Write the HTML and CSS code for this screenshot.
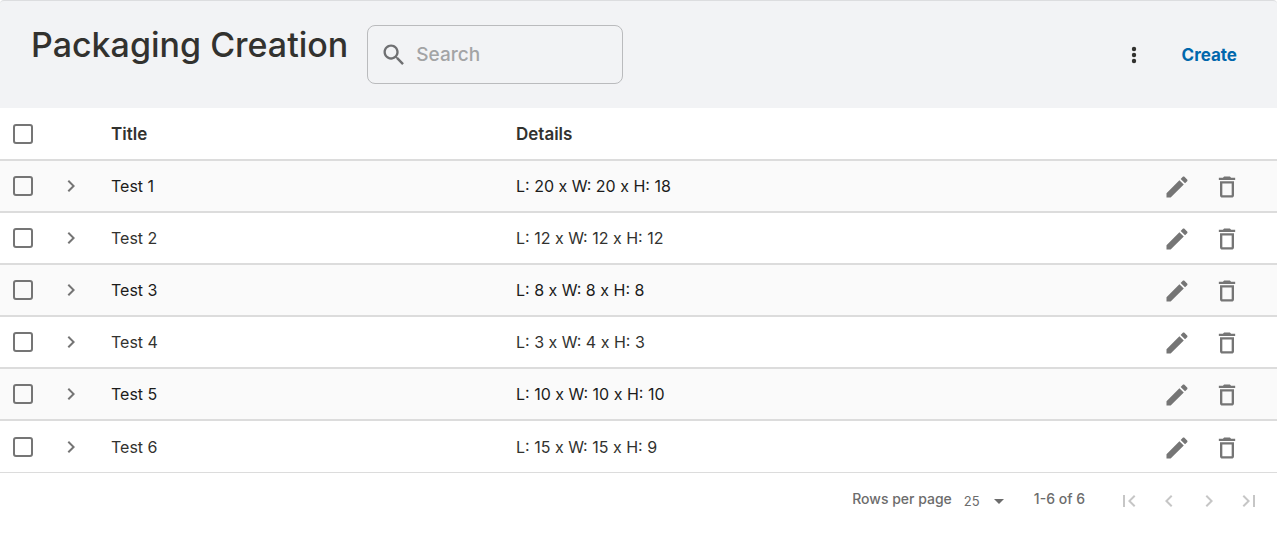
FILE: index.html
```html
<!DOCTYPE html>
<html lang="en">
<head>
<meta charset="utf-8">
<meta name="viewport" content="width=device-width, initial-scale=1">
<title>Packaging Creation</title>
<link rel="stylesheet" href="styles.css">
</head>
<body>
<svg class="sprite" aria-hidden="true">
  <symbol id="edit" viewBox="0 0 24 24"><path d="M3 17.460V21h3.540L17.810 9.940l-3.750-3.750L3 17.250zM20.710 7.040c.39-.39.39-1.020 0-1.410l-2.340-2.340c-.39-.39-1.020-.39-1.410 0l-1.830 1.830 3.750 3.750 1.830-1.830z"/></symbol>
  <symbol id="trash" viewBox="0 0 24 24"><path d="M6 19c0 1.100.9 2 2 2h8c1.100 0 2-.9 2-2V7H6v12zM8 9h8v10H8V9zm7.500-5l-1-1h-5l-1 1H5v2h14V4z"/></symbol>
  <symbol id="next" viewBox="0 0 24 24"><path d="M10 6L8.590 7.410 13.170 12l-4.580 4.590L10 18l6-6z"/></symbol>
  <symbol id="prev" viewBox="0 0 24 24"><path d="M15.410 7.410L14 6l-6 6 6 6 1.410-1.410L10.830 12z"/></symbol>
  <symbol id="first" viewBox="0 0 24 24"><path d="M18.410 16.590L13.820 12l4.590-4.590L17 6l-6 6 6 6zM6 6h2v12H6z"/></symbol>
  <symbol id="last" viewBox="0 0 24 24"><path d="M5.590 7.410L10.180 12l-4.590 4.590L7 18l6-6-6-6zM16 6h2v12h-2z"/></symbol>
</svg>
<header class="toolbar">
  <h1 class="heading">Packaging Creation</h1>
  <label class="search">
    <svg class="icon" viewBox="0 0 24 24" aria-hidden="true"><path d="M15.500 14h-.79l-.28-.27C15.410 12.590 16 11.110 16 9.500 16 5.910 13.090 3 9.500 3S3 5.910 3 9.500 5.910 16 9.500 16c1.610 0 3.090-.59 4.230-1.570l.27.28v.79l5 4.990L20.490 19l-4.990-5zm-6 0C7.010 14 5 11.990 5 9.500S7.010 5 9.500 5 14 7.010 14 9.500 11.990 14 9.500 14z"/></svg>
    <input class="search-input" type="search" placeholder="Search" aria-label="Search">
  </label>
  <div class="toolbar-actions">
    <button class="icon-button more" aria-label="More options"><svg class="icon-small" viewBox="0 0 24 24" aria-hidden="true"><circle cx="12" cy="6" r="2.200"/><circle cx="12" cy="12" r="2.200"/><circle cx="12" cy="18" r="2.200"/></svg></button>
    <button class="create">Create</button>
  </div>
</header>
<table class="table">
  <colgroup><col class="col-check"><col class="col-expand"><col class="col-title"><col><col class="col-actions"></colgroup>
  <thead>
    <tr><th class="check"><input class="checkbox" type="checkbox" aria-label="Select all"></th><th></th><th>Title</th><th>Details</th><th></th></tr>
  </thead>
  <tbody>
    <tr><td class="check"><input class="checkbox" type="checkbox" aria-label="Select Test 1"></td><td><button class="icon-button" aria-label="Expand"><svg class="icon-small" aria-hidden="true"><use href="#next"/></svg></button></td><td>Test 1</td><td>L: 20 x W: 20 x H: 18</td><td><div class="actions"><button class="icon-button" aria-label="Edit"><svg class="icon" aria-hidden="true"><use href="#edit"/></svg></button><button class="icon-button" aria-label="Delete"><svg class="icon" aria-hidden="true"><use href="#trash"/></svg></button></div></td></tr>
    <tr><td class="check"><input class="checkbox" type="checkbox" aria-label="Select Test 2"></td><td><button class="icon-button" aria-label="Expand"><svg class="icon-small" aria-hidden="true"><use href="#next"/></svg></button></td><td>Test 2</td><td>L: 12 x W: 12 x H: 12</td><td><div class="actions"><button class="icon-button" aria-label="Edit"><svg class="icon" aria-hidden="true"><use href="#edit"/></svg></button><button class="icon-button" aria-label="Delete"><svg class="icon" aria-hidden="true"><use href="#trash"/></svg></button></div></td></tr>
    <tr><td class="check"><input class="checkbox" type="checkbox" aria-label="Select Test 3"></td><td><button class="icon-button" aria-label="Expand"><svg class="icon-small" aria-hidden="true"><use href="#next"/></svg></button></td><td>Test 3</td><td>L: 8 x W: 8 x H: 8</td><td><div class="actions"><button class="icon-button" aria-label="Edit"><svg class="icon" aria-hidden="true"><use href="#edit"/></svg></button><button class="icon-button" aria-label="Delete"><svg class="icon" aria-hidden="true"><use href="#trash"/></svg></button></div></td></tr>
    <tr><td class="check"><input class="checkbox" type="checkbox" aria-label="Select Test 4"></td><td><button class="icon-button" aria-label="Expand"><svg class="icon-small" aria-hidden="true"><use href="#next"/></svg></button></td><td>Test 4</td><td>L: 3 x W: 4 x H: 3</td><td><div class="actions"><button class="icon-button" aria-label="Edit"><svg class="icon" aria-hidden="true"><use href="#edit"/></svg></button><button class="icon-button" aria-label="Delete"><svg class="icon" aria-hidden="true"><use href="#trash"/></svg></button></div></td></tr>
    <tr><td class="check"><input class="checkbox" type="checkbox" aria-label="Select Test 5"></td><td><button class="icon-button" aria-label="Expand"><svg class="icon-small" aria-hidden="true"><use href="#next"/></svg></button></td><td>Test 5</td><td>L: 10 x W: 10 x H: 10</td><td><div class="actions"><button class="icon-button" aria-label="Edit"><svg class="icon" aria-hidden="true"><use href="#edit"/></svg></button><button class="icon-button" aria-label="Delete"><svg class="icon" aria-hidden="true"><use href="#trash"/></svg></button></div></td></tr>
    <tr><td class="check"><input class="checkbox" type="checkbox" aria-label="Select Test 6"></td><td><button class="icon-button" aria-label="Expand"><svg class="icon-small" aria-hidden="true"><use href="#next"/></svg></button></td><td>Test 6</td><td>L: 15 x W: 15 x H: 9</td><td><div class="actions"><button class="icon-button" aria-label="Edit"><svg class="icon" aria-hidden="true"><use href="#edit"/></svg></button><button class="icon-button" aria-label="Delete"><svg class="icon" aria-hidden="true"><use href="#trash"/></svg></button></div></td></tr>
  </tbody>
</table>
<footer class="pagination">
  <label class="rows" for="page-size">Rows per page</label>
  <span class="select-wrap">
    <select class="page-size" id="page-size"><option>25</option><option>50</option></select>
    <svg class="caret" viewBox="0 0 10 5" aria-hidden="true"><path d="M0 0h10L5 5z"/></svg>
  </span>
  <span class="range">1-6 of 6</span>
  <nav class="pager" aria-label="Pages">
    <button class="icon-button" disabled aria-label="First page"><svg class="icon-small" aria-hidden="true"><use href="#first"/></svg></button>
    <button class="icon-button" disabled aria-label="Previous page"><svg class="icon-small" aria-hidden="true"><use href="#prev"/></svg></button>
    <button class="icon-button" disabled aria-label="Next page"><svg class="icon-small" aria-hidden="true"><use href="#next"/></svg></button>
    <button class="icon-button" disabled aria-label="Last page"><svg class="icon-small" aria-hidden="true"><use href="#last"/></svg></button>
  </nav>
</footer>
</body>
</html>
```
FILE: styles.css
```css
* { box-sizing: border-box; }
body {
  margin: 0;
  background: #fff;
  color: #32322f;
  font: 16px/24px Inter, "Liberation Sans", sans-serif;
}
button, input, select { margin: 0; padding: 0; border: 0; background: none; color: inherit; font: inherit; }
svg { display: block; fill: currentColor; }
.sprite { display: none; }
.icon { width: 28px; height: 28px; flex: none; }
.icon-small { width: 24px; height: 24px; flex: none; }
.icon-button { display: flex; color: #757575; }

.toolbar {
  display: flex;
  align-items: flex-start;
  gap: 19px;
  padding: 24px 40px 24px 31px;
  border-top: 1px solid #dcdddf;
  border-radius: 4px 4px 0 0;
  background: #f2f3f5;
}
.heading { margin: 0; font-size: 34px; line-height: 40px; font-weight: 500; }
.search {
  display: flex;
  align-items: center;
  gap: 8px;
  width: 256px;
  min-height: 59px;
  padding: 0 12px;
  border: 1px solid #babbbd;
  border-radius: 8px;
  color: #6f7072;
}
.search-input { flex: 1; min-width: 0; font-size: 19px; font-weight: 500; outline: 0; }
.search-input::placeholder { color: #a3a4a5; opacity: 1; }
.toolbar-actions { display: flex; align-items: center; gap: 36px; height: 59px; margin-left: auto; }
.more { color: #32322f; }
.create { color: #0067ac; font-size: 17px; font-weight: 700; }

.table { width: 100%; table-layout: fixed; border-collapse: separate; border-spacing: 0; }
.col-check { width: 59px; }
.col-expand { width: 52px; }
.col-title { width: 405px; }
.col-actions { width: 128px; }
.table th, .table td { height: 52px; padding: 0; border-bottom: 2px solid #dcdcdc; text-align: left; }
.table th { height: 53px; font-size: 17px; font-weight: 600; }
.table tbody tr:nth-child(odd) { background: #fafafa; color: #1c1c1b; }
.table tbody tr:last-child td { border-bottom-width: 1px; }
.table .check { padding-left: 13px; }
.checkbox {
  display: block;
  width: 20px;
  height: 20px;
  border: 2px solid #757575;
  border-radius: 3px;
  appearance: none;
}
.checkbox:checked { background: #0067ac; border-color: #0067ac; }
.actions { display: flex; gap: 22px; padding: 2px 0 0 14px; }

.pagination {
  display: flex;
  align-items: center;
  justify-content: flex-end;
  padding: 14px 16px 16px 32px;
  color: #6c6c6c;
  font-size: 14px;
  font-weight: 500;
}
.rows, .range { padding-bottom: 4px; }
.select-wrap { display: flex; align-items: center; margin-left: 12px; }
.page-size { width: 40px; margin-right: -10px; font-size: 13px; font-weight: 400; appearance: none; }
.caret { width: 10px; height: 5px; pointer-events: none; }
.range { margin-left: 30px; }
.pager { display: flex; gap: 16px; margin-left: 32px; }
.pager .icon-button { color: #c6c6c6; }
```
